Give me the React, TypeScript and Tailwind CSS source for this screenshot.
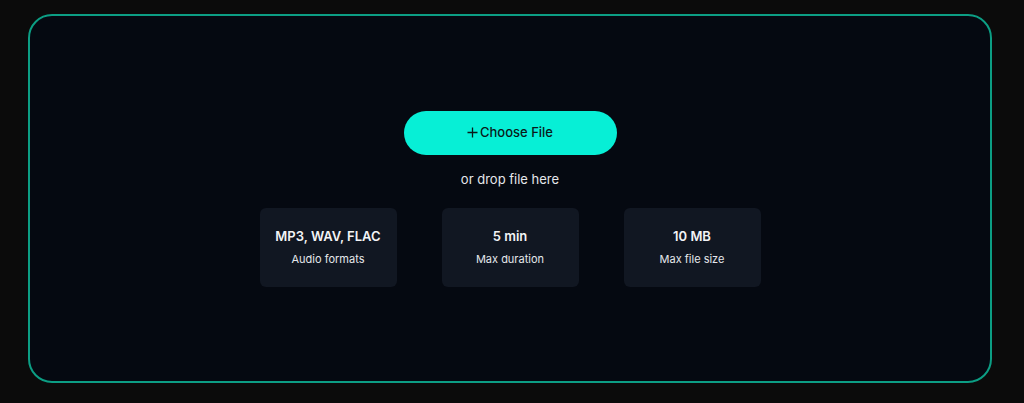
import React from "react";

function Stat({ title, sub }: { title: string; sub: string }) {
  return (
    <div className="flex h-[79px] w-[137px] flex-col items-center justify-center gap-[8px] rounded-md bg-[#111722]">
      <div className="text-[13px] font-semibold leading-[16px] text-[#f3f4f6]">{title}</div>
      <div className="text-[11px] leading-[14px] text-[#e5e7eb]">{sub}</div>
    </div>
  );
}

export default function App() {
  return (
    <div
      className="min-h-[403px] w-full bg-[#0b0b0b] pl-7 pr-8 pt-[14px] pb-5"
      style={{ fontFamily: "Inter, 'Noto Sans', sans-serif" }}
    >
      <div className="flex h-[369px] flex-col items-center justify-center rounded-[24px] border-2 border-[#0c9e84] bg-[#050911]">
        <button className="flex h-[44px] w-[213px] items-center justify-center gap-[2px] rounded-full bg-[#07efd6] text-[13px] font-medium text-[#0a1a1a]">
          <svg width="11" height="11" viewBox="0 0 11 11" fill="none" stroke="#0a1a1a" strokeWidth="1.3">
            <path d="M5.5 0.5v10M0.5 5.5h10" />
          </svg>
          <span>Choose File</span>
        </button>
        <div className="mt-[16px] text-[13px] leading-[16px] text-[#e5e7eb]">or drop file here</div>
        <div className="mt-[21px] flex gap-[45px]">
          <Stat title="MP3, WAV, FLAC" sub="Audio formats" />
          <Stat title="5 min" sub="Max duration" />
          <Stat title="10 MB" sub="Max file size" />
        </div>
      </div>
    </div>
  );
}
